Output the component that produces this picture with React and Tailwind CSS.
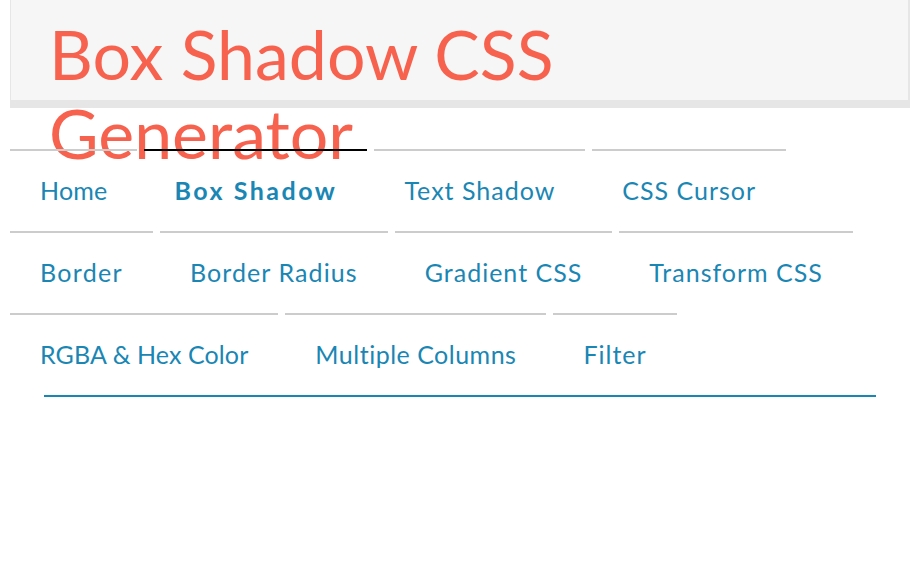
export default function App() {
  const rows = [
    { label: 'Home', tracking: 'tracking-[0.2px]' },
    { label: 'Box Shadow', active: true },
    { label: 'Text Shadow', tracking: 'tracking-[1px]' },
    { label: 'CSS Cursor', tracking: 'tracking-[1px]' },
    { label: 'Border', tracking: 'tracking-[1.3px]' },
    { label: 'Border Radius', tracking: 'tracking-[1.1px]' },
    { label: 'Gradient CSS', tracking: 'tracking-[1px]' },
    { label: 'Transform CSS', tracking: 'tracking-[1px]' },
    { label: 'RGBA & Hex Color', tracking: 'tracking-[0.1px]' },
    { label: 'Multiple Columns', tracking: 'tracking-[0.5px]' },
    { label: 'Filter', tracking: 'tracking-[1px]' },
  ];

  return (
    <div className="min-h-screen bg-white font-['Lato','Liberation_Sans',sans-serif]">
      <header className="mx-[10px] h-[108px] border-l border-r-2 border-b-8 border-[#e6e6e6] bg-[#f6f6f6] pl-[38px] pt-[14px]">
        <h1 className="max-w-[600px] text-[68px] leading-[79px] font-normal text-[#f7624e]">
          Box Shadow CSS Generator
        </h1>
      </header>

      <nav className="mx-[10px] mt-[41px]">
        <ul className="flex flex-wrap gap-x-[7px]">
          {rows.map((item, i) => (
            <li
              key={i}
              className={
                item.active
                  ? 'border-t-2 border-black px-[30px] pt-[24px] pb-[26px] text-[25px] leading-[30px] font-bold tracking-[2.5px] text-[#1a86b4]'
                  : `border-t-2 border-[#cccccc] px-[30px] pt-[24px] pb-[26px] text-[25px] leading-[30px] text-[#1a86b4] ${item.tracking}`
              }
            >
              {item.label}
            </li>
          ))}
        </ul>
        <div className="mx-[34px] h-[2px] bg-[#1a86b4]"></div>
      </nav>
    </div>
  );
}
